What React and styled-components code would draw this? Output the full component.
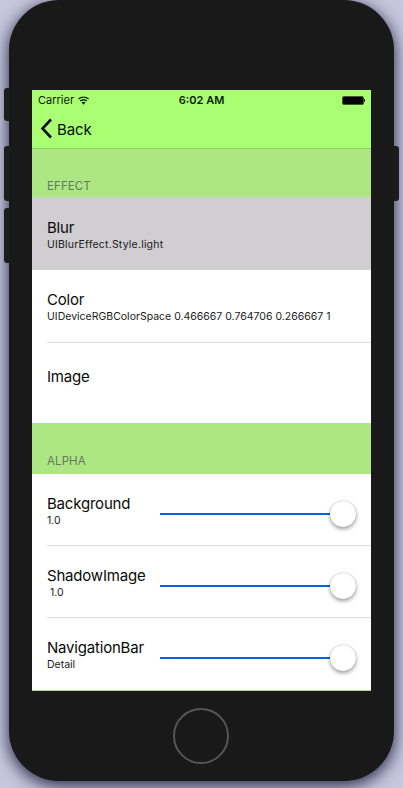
import React from "react"
import styled, { createGlobalStyle } from "styled-components"

const GlobalStyle = createGlobalStyle`
  html, body {
    margin: 0;
    padding: 0;
    background: #c6c6de;
  }
  body {
    font-family: "Inter", "Liberation Sans", sans-serif;
    -webkit-font-smoothing: antialiased;
  }
`

const App = () => {
  return (
    <Page>
      <GlobalStyle />
      <Phone>
        <MuteKey />
        <VolumeUpKey />
        <VolumeDownKey />
        <PowerKey />
        <Screen>
          <NavBar>
            <StatusBar>
              <Carrier>
                Carrier
                <WifiIcon viewBox="0 0 14 10">
                  <path d="M7 9.6 L4.9 7.3 C6.1 6.2 7.9 6.2 9.1 7.3 Z" />
                  <path d="M3.9 6.2 L2.9 5.1 C5.2 3 8.8 3 11.1 5.1 L10.1 6.2 C8.3 4.6 5.7 4.6 3.9 6.2 Z" />
                  <path d="M1.9 4 L0.9 2.9 C4.4 -0.3 9.6 -0.3 13.1 2.9 L12.1 4 C9.2 1.4 4.8 1.4 1.9 4 Z" />
                </WifiIcon>
              </Carrier>
              <Clock>6:02 AM</Clock>
              <Battery>
                <BatteryBody />
                <BatteryCap />
              </Battery>
            </StatusBar>
            <BackRow>
              <Chevron viewBox="0 0 13 21">
                <path d="M11 1.5 L2.5 10.5 L11 19.5" />
              </Chevron>
              <BackLabel>Back</BackLabel>
            </BackRow>
          </NavBar>

          <SectionHeader $height={48} $bottom={4}>EFFECT</SectionHeader>
          <EffectRow $selected $height={73}>
            <RowTitle>Blur</RowTitle>
            <RowDetail $wide>UIBlurEffect.Style.light</RowDetail>
          </EffectRow>
          <Divided>
            <EffectRow $height={73}>
              <RowTitle>Color</RowTitle>
              <RowDetail>UIDeviceRGBColorSpace 0.466667 0.764706 0.266667 1</RowDetail>
            </EffectRow>
          </Divided>
          <EffectRow $height={80} $noDetail>
            <RowTitle>Image</RowTitle>
          </EffectRow>

          <SectionHeader $height={51} $bottom={6}>ALPHA</SectionHeader>
          <Divided>
            <SliderRow title="Background" detail="1.0" />
          </Divided>
          <Divided>
            <SliderRow title="ShadowImage" detail="1.0" $indent />
          </Divided>
          <SliderRow title="NavigationBar" detail="Detail" />
          <BottomEdge />
        </Screen>
        <HomeButton />
      </Phone>
    </Page>
  )
}

const SliderRow = ({ title, detail, $indent }) => (
  <AlphaRow>
    <AlphaLabels>
      <RowTitle>{title}</RowTitle>
      <RowDetail $indent={$indent}>{detail}</RowDetail>
    </AlphaLabels>
    <Track>
      <Thumb />
    </Track>
  </AlphaRow>
)

export default App

const Page = styled.div`
  width: 403px;
  height: 788px;
  padding-left: 9px;
  box-sizing: border-box;
  overflow: hidden;
  background: #c6c6de;
`

const Phone = styled.div`
  position: relative;
  width: 385px;
  height: 781px;
  padding: 90px 22px 0 23px;
  box-sizing: border-box;
  background: #191919;
  border-radius: 50px;
  box-shadow: 0 4px 16px 1px rgba(30, 30, 60, 0.9);
`

const SideKey = styled.div`
  position: absolute;
  width: 6px;
  background: #1c1c1c;
`

const MuteKey = styled(SideKey)`
  left: -5px;
  top: 88px;
  height: 33px;
  border-radius: 3px 0 0 3px;
`

const VolumeUpKey = styled(SideKey)`
  left: -5px;
  top: 146px;
  height: 55px;
  border-radius: 3px 0 0 3px;
`

const VolumeDownKey = styled(SideKey)`
  left: -5px;
  top: 208px;
  height: 55px;
  border-radius: 3px 0 0 3px;
`

const PowerKey = styled(SideKey)`
  right: -5px;
  top: 146px;
  height: 55px;
  border-radius: 0 3px 3px 0;
`

const Screen = styled.div`
  width: 339px;
  height: 601px;
  display: flex;
  flex-direction: column;
  background: #ffffff;
  overflow: hidden;
`

const NavBar = styled.div`
  height: 58px;
  flex: none;
  background: #a9fe72;
  border-bottom: 1px solid #8fd162;
`

const StatusBar = styled.div`
  height: 20px;
  display: grid;
  grid-template-columns: 1fr auto 1fr;
  align-items: center;
  padding: 0 6px;
  color: #0b1a05;
  font-size: 11px;
`

const Carrier = styled.div`
  display: flex;
  align-items: center;
  gap: 3px;
`

const WifiIcon = styled.svg`
  width: 13px;
  height: 9px;
  fill: #0b1a05;
`

const Clock = styled.div`
  font-weight: 600;
`

const Battery = styled.div`
  display: flex;
  align-items: center;
  justify-content: flex-end;
`

const BatteryBody = styled.div`
  width: 20px;
  height: 7px;
  background: #050505;
  border: 1px solid #3c5a2a;
  border-radius: 2px;
`

const BatteryCap = styled.div`
  width: 1px;
  height: 3px;
  background: #1a2a10;
`

const BackRow = styled.div`
  height: 38px;
  display: flex;
  align-items: center;
  padding-left: 8px;
  gap: 4px;
`

const Chevron = styled.svg`
  width: 13px;
  height: 21px;
  fill: none;
  stroke: #0a0a0a;
  stroke-width: 2.6;
  margin-top: -1px;
`

const BackLabel = styled.span`
  font-size: 15px;
  letter-spacing: -0.1px;
  color: #0a0a0a;
`

const SectionHeader = styled.div`
  height: ${(p) => p.$height}px;
  flex: none;
  box-sizing: border-box;
  display: flex;
  align-items: flex-end;
  padding: 0 15px ${(p) => p.$bottom}px;
  background: #ade784;
  color: #69755f;
  font-size: 11.5px;
  letter-spacing: 0.1px;
`

const EffectRow = styled.div`
  height: ${(p) => p.$height}px;
  flex: none;
  box-sizing: border-box;
  display: flex;
  flex-direction: column;
  justify-content: ${(p) => (p.$noDetail ? "flex-start" : "center")};
  padding: ${(p) => (p.$noDetail ? "24px" : p.$selected ? "2px" : "1px")} 15px 0;
  background: ${(p) => (p.$selected ? "#d0ced1" : "#ffffff")};
`

const Divided = styled.div`
  position: relative;
  flex: none;
  &::after {
    content: "";
    position: absolute;
    left: 15px;
    right: 0;
    bottom: 0;
    height: 1px;
    background: #dcdcdc;
  }
`

const RowTitle = styled.div`
  font-size: 15px;
  letter-spacing: -0.2px;
  line-height: 20px;
  color: #0a0a0a;
`

const RowDetail = styled.div`
  font-size: 10.5px;
  line-height: 14px;
  color: #1a1a1a;
  white-space: nowrap;
  letter-spacing: ${(p) => (p.$wide ? "0.2px" : "0")};
  padding-left: ${(p) => (p.$indent ? "3px" : "0")};
`

const AlphaRow = styled.div`
  height: 72px;
  box-sizing: border-box;
  display: flex;
  align-items: center;
  padding: 1px 15px 0;
`

const AlphaLabels = styled.div`
  width: 113px;
  flex: none;
`

const Track = styled.div`
  position: relative;
  flex: 1;
  height: 2px;
  background: #0860ea;
  margin-top: 7px;
  margin-right: 2px;
`

const Thumb = styled.div`
  position: absolute;
  right: -2px;
  top: -12px;
  width: 26px;
  height: 26px;
  border-radius: 50%;
  background: #ffffff;
  box-shadow: 0 2px 4px rgba(0, 0, 0, 0.4), 0 0 1px rgba(0, 0, 0, 0.3);
`

const BottomEdge = styled.div`
  height: 1px;
  flex: none;
  background: #a9e07f;
`

const HomeButton = styled.div`
  width: 56px;
  height: 56px;
  box-sizing: border-box;
  margin: 17px 0 0 141px;
  border: 2px solid #555555;
  border-radius: 50%;
`
